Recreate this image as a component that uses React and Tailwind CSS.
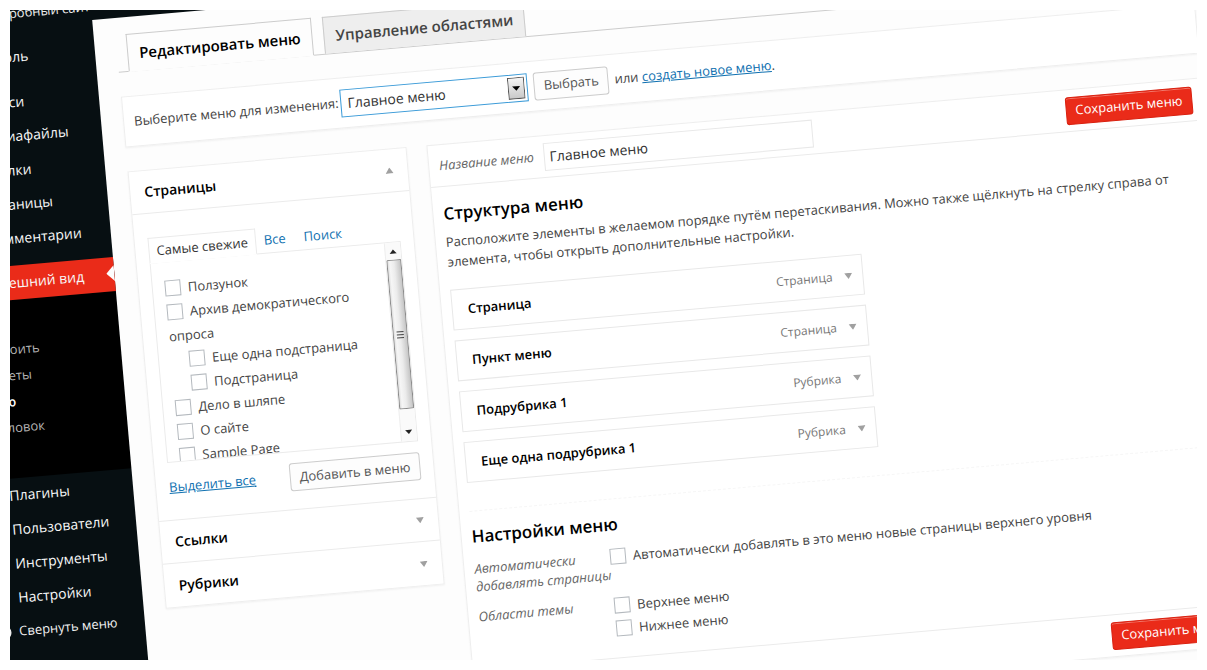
import React from 'react';

const sideItemsTop = ['Записи', 'Медиафайлы', 'Ссылки', 'Страницы', 'Комментарии'];
const sideItemsBottom = ['Плагины', 'Пользователи', 'Инструменты', 'Настройки'];

const menuItems = [
    { title: 'Страница', type: 'Страница' },
    { title: 'Пункт меню', type: 'Страница' },
    { title: 'Подрубрика 1', type: 'Рубрика' },
    { title: 'Еще одна подрубрика 1', type: 'Рубрика' },
];

const pages = [
    { title: 'Ползунок' },
    { title: 'Архив демократического опроса', children: ['Еще одна подстраница', 'Подстраница'] },
    { title: 'Дело в шляпе' },
    { title: 'О сайте' },
    { title: 'Sample Page' },
];

const Triangle = ({ up }) => (
    <svg viewBox="0 0 8 6" className="w-2 h-1.5 shrink-0" fill="#a0a0a0" aria-hidden="true">
        <path d={up ? 'M0 6 4 0l4 6z' : 'M0 0h8L4 6z'} />
    </svg>
);

const SideItem = ({ children }) => (
    <a href="#" className="block h-[34px] pl-9 text-sm leading-[34px] text-[#f8f8f8]">
        {children}
    </a>
);

const Check = ({ children }) => (
    <label className="block">
        <input
            type="checkbox"
            className="appearance-none w-4 h-4 mr-[7px] mb-1 border border-[#b4b9be] bg-white align-middle"
        />
        {children}
    </label>
);

const SaveButton = () => (
    <button className="h-7 px-[9px] rounded-[3px] border border-[#d9200f] bg-[#ea2b19] text-[13px] leading-none text-white shadow-[inset_0_1px_0_#f1796d]">
        Сохранить меню
    </button>
);

const PlainButton = ({ children }) => (
    <button className="h-7 px-[9px] rounded-[3px] border border-[#ccc] bg-[#fdfdfd] text-[13px] leading-none text-[#555]">
        {children}
    </button>
);

const Sidebar = () => (
    <nav className="w-40 shrink-0 pt-[13px]">
        <SideItem>Консоль</SideItem>
        <div className="h-[11px]" />
        {sideItemsTop.map((item) => (
            <SideItem key={item}>{item}</SideItem>
        ))}
        <div className="h-[10px]" />
        <div className="relative bg-[#ea2b19]">
            <SideItem>Внешний вид</SideItem>
            <svg viewBox="0 0 8 16" className="absolute right-0 top-2 w-2 h-4" fill="#fdfdfd" aria-hidden="true">
                <path d="M8 0v16L0 8z" />
            </svg>
        </div>
        <div className="h-[178px] pt-[10px] pl-3 bg-black text-[13px] leading-[26px] text-[#b4b4b4]">
            <a href="#" className="block">Темы</a>
            <a href="#" className="block">Настроить</a>
            <a href="#" className="block">Виджеты</a>
            <a href="#" className="block font-semibold text-white">Меню</a>
            <a href="#" className="block">Заголовок</a>
        </div>
        {sideItemsBottom.map((item) => (
            <SideItem key={item}>{item}</SideItem>
        ))}
        <button className="flex items-center h-[34px] pl-[10px] gap-1.5 text-[13px] text-[#f1f1f1]">
            <svg viewBox="0 0 20 20" className="w-[18px] h-[18px]" aria-hidden="true">
                <circle cx="10" cy="10" r="8" fill="#eee" />
                <path d="M12.5 6v8L7 10z" fill="#070f12" />
            </svg>
            Свернуть меню
        </button>
    </nav>
);

const Tabs = () => (
    <div className="flex gap-[11px] pt-[17px] pl-[10px] border-b border-[#ccc] text-[15px] font-semibold">
        <a href="#" className="-mb-px px-[11px] h-[38px] leading-[36px] border border-b-[#fdfdfd] border-[#ccc] bg-[#fdfdfd] text-black">
            Редактировать меню
        </a>
        <a href="#" className="px-[11px] h-[37px] leading-[36px] border border-b-0 border-[#ccc] bg-[#eee] text-[#444]">
            Управление областями
        </a>
    </div>
);

const MenuPicker = () => (
    <div className="flex items-center gap-1.5 h-[51px] mt-6 px-[10px] border border-[#eee] bg-white shadow-xs">
        <label htmlFor="menu" className="-mr-1">Выберите меню для изменения:</label>
        <div className="relative">
            <select
                id="menu"
                className="appearance-none block w-[188px] h-7 px-1.5 border border-[#3b9bd8] bg-white text-sm text-[#333]"
            >
                <option>Главное меню</option>
            </select>
            <svg viewBox="0 0 17 22" className="absolute right-[3px] top-[3px] w-[17px] h-[22px] pointer-events-none" aria-hidden="true">
                <defs>
                    <linearGradient id="btn" x1="0" y1="0" x2="0" y2="1">
                        <stop offset="0" stopColor="#f6f6f6" />
                        <stop offset="1" stopColor="#c8c8c8" />
                    </linearGradient>
                </defs>
                <rect x=".5" y=".5" width="16" height="21" fill="url(#btn)" stroke="#555" />
                <path d="M4.5 9h8l-4 4.500z" fill="#000" />
            </svg>
        </div>
        <PlainButton>Выбрать</PlainButton>
        <p>
            или <a href="#" className="text-[#0f70b0] underline">создать новое меню</a>.
        </p>
    </div>
);

const Scrollbar = () => (
    <div className="flex flex-col items-center w-4 shrink-0 border-l border-[#eee] bg-[#fafafa]">
        <svg viewBox="0 0 15 17" className="w-[15px] h-[17px]" aria-hidden="true">
            <path d="M4 11h7L7.500 7z" fill="#222" />
        </svg>
        <svg viewBox="0 0 15 150" className="w-[15px] h-[150px]" aria-hidden="true">
            <defs>
                <linearGradient id="thumb">
                    <stop offset="0" stopColor="#d8d8d8" />
                    <stop offset=".2" stopColor="#f6f6f6" />
                    <stop offset=".5" stopColor="#ececec" />
                    <stop offset="1" stopColor="#c2c2c2" />
                </linearGradient>
            </defs>
            <rect x=".5" y=".5" width="14" height="149" rx="1" fill="url(#thumb)" stroke="#8a8a8a" />
            <path d="M4 72.500h7M4 75.500h7M4 78.500h7" stroke="#444" />
        </svg>
        <svg viewBox="0 0 15 17" className="w-[15px] h-[17px] mt-auto" aria-hidden="true">
            <path d="M4 6h7l-3.500 4z" fill="#222" />
        </svg>
    </div>
);

const SectionTitle = ({ children, up }) => (
    <h3 className="flex items-center justify-between h-[43px] px-[14px] text-sm font-semibold text-black">
        {children}
        <Triangle up={up} />
    </h3>
);

const Accordion = () => (
    <div className="w-[280px] shrink-0 border border-[#eee] bg-white shadow-xs divide-y divide-[#ebebeb]">
        <SectionTitle up>Страницы</SectionTitle>
        <div className="px-[13px] pt-6 pb-[18px]">
            <div className="flex leading-6">
                <a href="#" className="-mb-px px-[7px] h-[26px] border border-b-white border-[#ebebeb] bg-white text-[#333]">
                    Самые свежие
                </a>
                <a href="#" className="pl-2 text-[#0f70b0]">Все</a>
                <a href="#" className="pl-[18px] text-[#0f70b0]">Поиск</a>
            </div>
            <div className="flex h-[201px] border border-[#ebebeb]">
                <ul className="flex-1 overflow-hidden pt-[14px] pl-3 leading-6">
                    {pages.map((page) => (
                        <li key={page.title}>
                            <Check>{page.title}</Check>
                            {page.children && (
                                <ul className="ml-[18px]">
                                    {page.children.map((child) => (
                                        <li key={child}><Check>{child}</Check></li>
                                    ))}
                                </ul>
                            )}
                        </li>
                    ))}
                </ul>
                <Scrollbar />
            </div>
            <div className="flex items-center justify-between mt-[11px]">
                <a href="#" className="text-[#0f70b0] underline">Выделить все</a>
                <PlainButton>Добавить в меню</PlainButton>
            </div>
        </div>
        <SectionTitle>Ссылки</SectionTitle>
        <SectionTitle>Рубрики</SectionTitle>
    </div>
);

const MenuEditor = () => (
    <div className="flex-1 border border-[#eee] bg-white shadow-xs">
        <div className="flex items-center h-[42px] px-[10px] border-b border-[#ebebeb]">
            <label htmlFor="menu-name" className="italic text-[#666]">Название меню</label>
            <input
                id="menu-name"
                type="text"
                defaultValue="Главное меню"
                className="w-[270px] h-7 ml-[10px] px-[5px] border border-[#e8e8e8] text-sm text-[#333]"
            />
            <div className="flex ml-auto"><SaveButton /></div>
        </div>

        <div className="px-[10px] pt-[15px]">
            <h2 className="text-[17px] leading-6 font-semibold text-black">Структура меню</h2>
            <p className="mt-1.5 leading-5">
                Расположите элементы в желаемом порядке путём перетаскивания. Можно также щёлкнуть на стрелку справа от
                <br />
                элемента, чтобы открыть дополнительные настройки.
            </p>
            <ul className="flex flex-col gap-[10px] w-[413px] mt-[18px]">
                {menuItems.map((item) => (
                    <li key={item.title} className="flex items-center h-[41px] pl-[15px] pr-[10px] border border-[#e8e8e8]">
                        <span className="text-[13px] font-semibold text-black">{item.title}</span>
                        <span className="ml-auto mr-3 text-xs text-[#777]">{item.type}</span>
                        <Triangle />
                    </li>
                ))}
            </ul>
        </div>

        <div className="mx-[10px] mt-7 pt-[13px] border-t border-dashed border-[#f6f6f6]">
            <h2 className="text-[17px] leading-6 font-semibold text-black">Настройки меню</h2>
            <div className="flex mt-2">
                <p className="w-[136px] shrink-0 pt-[3px] italic leading-[18px] text-[#666]">Автоматически<br />добавлять страницы</p>
                <div className="leading-6"><Check>Автоматически добавлять в это меню новые страницы верхнего уровня</Check></div>
            </div>
            <div className="flex mt-[9px]">
                <p className="w-[136px] shrink-0 pt-[3px] italic leading-[18px] text-[#666]">Области темы</p>
                <div className="pt-0.5 leading-[23px]">
                    <Check>Верхнее меню</Check>
                    <Check>Нижнее меню</Check>
                </div>
            </div>
        </div>

        <div className="flex items-center justify-end h-[42px] mt-[17px] px-[10px] border-t border-[#ebebeb]">
            <SaveButton />
        </div>
    </div>
);

export default function App() {
    return (
        <div className="h-screen p-[10px] bg-white font-['Open_Sans',sans-serif]">
            <div className="h-full overflow-hidden bg-[#fdfdfd]">
                <div className="w-[107%] -ml-20 -mt-2 -rotate-5 origin-top-left bg-[#070f12] text-[13px] text-[#444]">
                    <header className="flex items-center h-8 pt-1.5 pl-[68px] text-[#eee]">
                        <a href="#">Пробный сайт</a>
                    </header>
                    <div className="flex">
                        <Sidebar />
                        <main className="flex-1 min-w-0 pl-[22px] pr-[10px] pb-10 bg-[#fdfdfd]">
                            <Tabs />
                            <MenuPicker />
                            <div className="flex items-start gap-5 mt-6">
                                <Accordion />
                                <MenuEditor />
                            </div>
                        </main>
                    </div>
                </div>
            </div>
        </div>
    );
}
